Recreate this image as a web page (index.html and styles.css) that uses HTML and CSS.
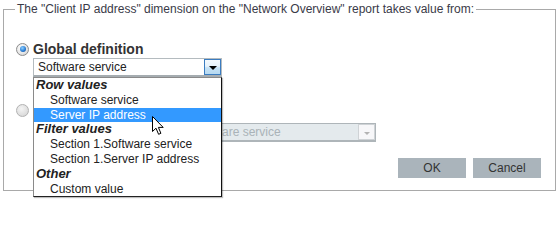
FILE: index.html
```html
<!DOCTYPE html>
<html>
<head>
<meta charset="utf-8">
<link rel="stylesheet" href="styles.css">
</head>
<body>
<div class="group">
  <span class="legend">The "Client IP address" dimension on the "Network Overview" report takes value from:</span>
  <div class="radio-row">
    <span class="radio checked"></span>
    <span class="radio-label">Global definition</span>
  </div>
  <div class="combo combo-main">
    <div class="select">
      <span class="select-text">Software service</span>
      <span class="arrow"><span class="tri"></span></span>
    </div>
    <div class="list">
      <div class="grp">Row values</div>
      <div class="opt">Software service</div>
      <div class="opt sel">Server IP address</div>
      <div class="grp">Filter values</div>
      <div class="opt">Section 1.Software service</div>
      <div class="opt">Section 1.Server IP address</div>
      <div class="grp">Other</div>
      <div class="opt">Custom value</div>
    </div>
  </div>
  <div class="radio-row row2">
    <span class="radio disabled"></span>
  </div>
  <div class="combo combo-dis">
    <div class="select dis">
      <span class="select-text dis-text">are service</span>
      <span class="arrow"><span class="tri"></span></span>
    </div>
  </div>
  <div class="buttons">
    <span class="btn">OK</span>
    <span class="btn">Cancel</span>
  </div>
</div>
<svg class="cursor" width="13" height="20" viewBox="0 0 13 20">
  <path d="M0.5 0.5 L0.5 15.5 L4 12.2 L6.6 18.3 L8.9 17.3 L6.4 11.4 L11.2 11.4 Z" fill="#fff" stroke="#000" stroke-width="1" stroke-linejoin="miter"/>
</svg>
</body>
</html>
```

FILE: styles.css
```css
html, body {
  margin: 0;
  background: #fff;
}
body {
  box-sizing: border-box;
  height: 202px;
  padding: 9px 4px 0 3px;
  font-family: "Liberation Sans", Arial, sans-serif;
  font-size: 12px;
  color: #333;
  position: relative;
}
.group {
  position: relative;
  border: 1px solid #a9a9a9;
  padding: 30px 14px 12px 11px;
}
.legend {
  position: absolute;
  top: -8px;
  left: 11px;
  padding: 0 2px;
  line-height: 14px;
  font-size: 12px;
  color: #3a3a48;
  background: #fff;
  white-space: nowrap;
}
.radio-row {
  display: flex;
  align-items: center;
  height: 18px;
}
.row2 {
  margin-top: 24px;
}
.radio {
  width: 11px;
  height: 11px;
  margin-left: 1px;
  border: 1px solid #8c8c8c;
  border-radius: 50%;
  background: radial-gradient(circle at 40% 35%, #ffffff 0%, #e4e4e4 60%, #c8c8c8 100%);
  position: relative;
  flex: none;
}
.radio.checked::after {
  content: "";
  position: absolute;
  left: 2.5px;
  top: 2.5px;
  width: 6px;
  height: 6px;
  border-radius: 50%;
  background: radial-gradient(circle at 40% 35%, #8fd0ff 0%, #2b7fd6 55%, #0d3f8a 100%);
}
.radio.disabled {
  border-color: #b2b2b2;
  background: radial-gradient(circle at 40% 35%, #f4f4f4 0%, #dcdcdc 70%, #c9c9c9 100%);
}
.radio-label {
  margin-left: 4px;
  font-weight: bold;
  font-size: 14px;
  line-height: 18px;
  color: #333;
}
.combo {
  position: relative;
}
.combo-main {
  margin-left: 18px;
  width: 189px;
}
.combo-dis {
  margin-top: 4px;
  margin-left: 171px;
  width: 190px;
}
.select {
  display: flex;
  height: 19px;
  box-sizing: border-box;
  border: 1px solid #b4bbbf;
  border-bottom: 2px solid #a5acb0;
  background: #fff;
}
.select-text {
  flex: 1;
  padding-left: 4px;
  line-height: 16px;
  font-size: 12px;
  color: #222;
  white-space: nowrap;
  overflow: hidden;
}
.dis-text {
  padding-left: 35px;
}
.arrow {
  width: 17px;
  height: 16px;
  box-sizing: border-box;
  border: 1px solid #3b7cc0;
  background: linear-gradient(#f4f9fd 0%, #e6f2fb 45%, #c6e2f5 55%, #b6d9f1 100%);
  display: flex;
  justify-content: center;
  align-items: center;
  flex: none;
}
.tri {
  width: 0;
  height: 0;
  border-left: 4px solid transparent;
  border-right: 4px solid transparent;
  border-top: 4px solid #000;
  margin-top: 2px;
}
.select.dis {
  background: #e4eaed;
  border-color: #aeb5b9;
}
.select.dis .select-text {
  color: #aab3b8;
}
.select.dis .arrow {
  border: 1px solid #cfd3d6;
  background: #f7f7f9;
}
.select.dis .tri {
  border-left-width: 3px;
  border-right-width: 3px;
  border-top: 3px solid #b3b3b3;
}
.list {
  position: absolute;
  left: 0;
  top: 100%;
  width: 100%;
  box-sizing: border-box;
  background: #fff;
  border: 1px solid #555;
  border-left-color: #8a8a8a;
  border-top-color: #8a8a8a;
  border-right-color: #111;
  border-bottom-color: #222;
  box-shadow: 1px 1px 1px rgba(0, 0, 0, 0.25);
  z-index: 5;
}
.grp, .opt {
  height: 14.8px;
  line-height: 14.8px;
  white-space: nowrap;
}
.grp {
  font-weight: bold;
  font-style: italic;
  font-size: 13px;
  padding-left: 2px;
  color: #222;
}
.opt {
  font-size: 12px;
  padding-left: 16px;
  color: #222;
}
.opt.sel {
  background: #3399ff;
  color: #fff;
}
.buttons {
  margin-top: 16px;
  display: flex;
  justify-content: flex-end;
  gap: 7px;
}
.btn {
  width: 68px;
  height: 20px;
  line-height: 20px;
  text-align: center;
  background: #aab4bb;
  color: #333;
  font-size: 12px;
}
.cursor {
  position: absolute;
  left: 151.5px;
  top: 115.5px;
  z-index: 10;
}
```
